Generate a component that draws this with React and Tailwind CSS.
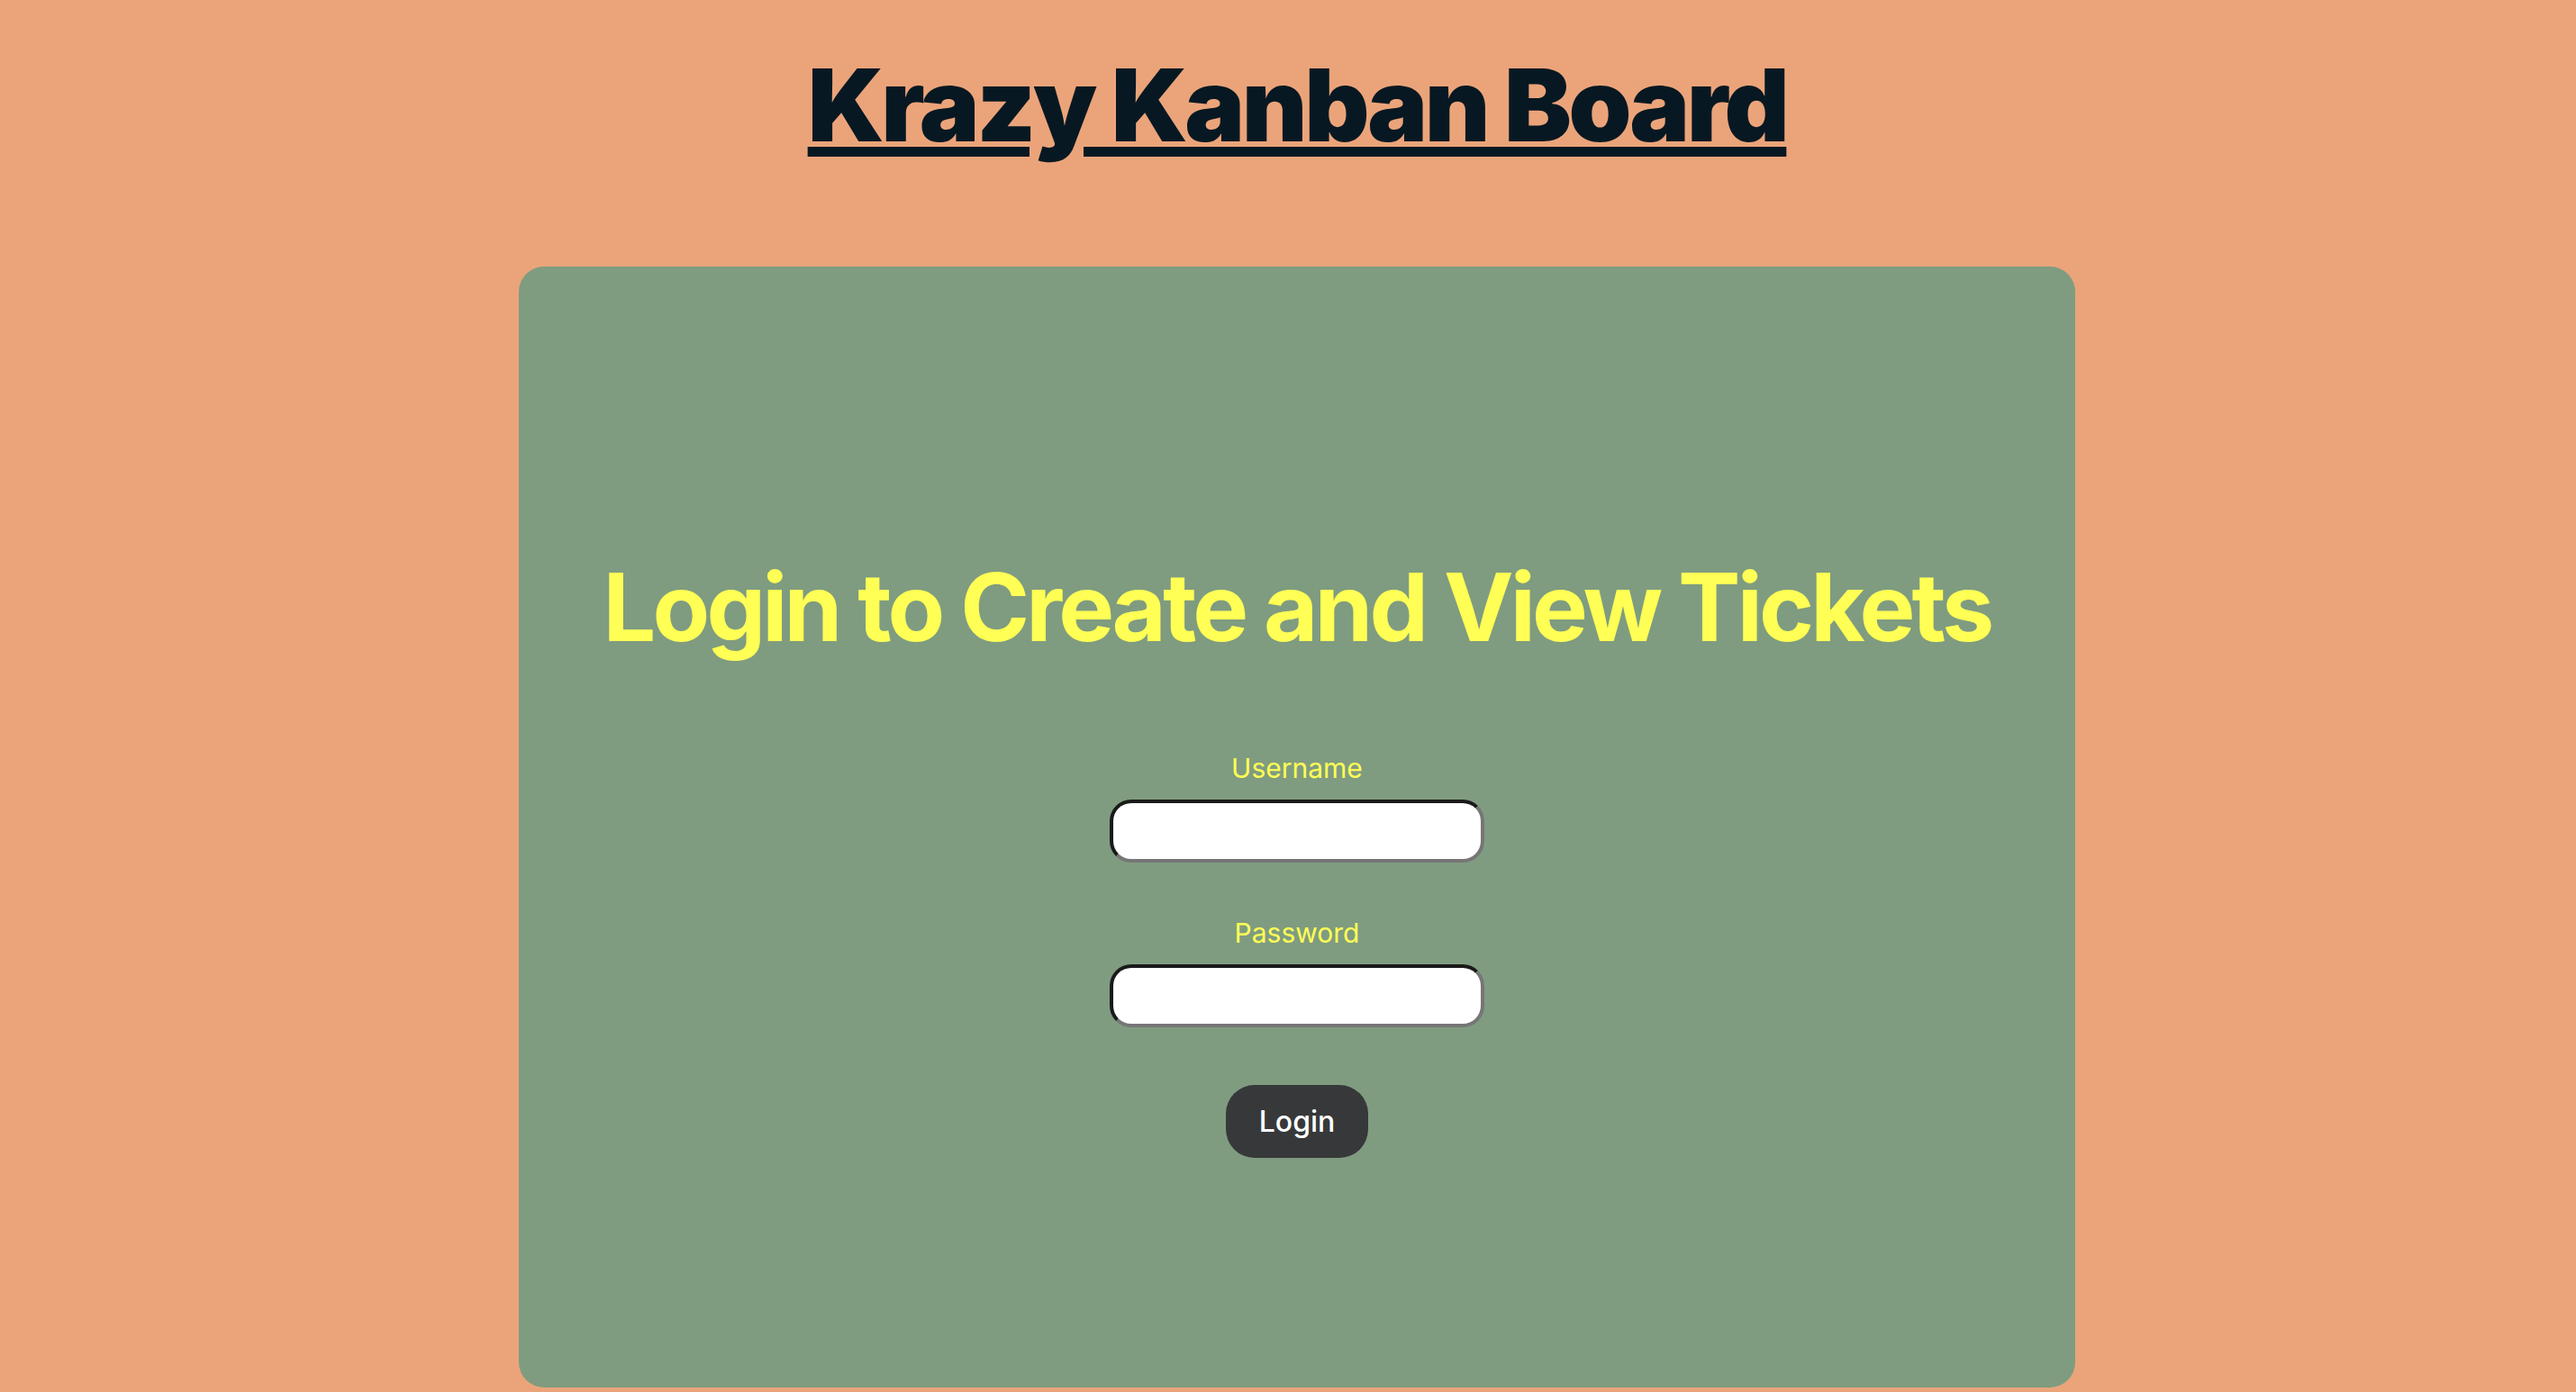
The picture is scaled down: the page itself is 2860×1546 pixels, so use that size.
import { useState } from "react";

const Login = () => {
    const [loginData, setLoginData] = useState({
        username: "",
        password: "",
    });

    const handleChange = (e) => {
        const { name, value } = e.target;
        setLoginData({
            ...loginData,
            [name]: value,
        });
    };

    const handleSubmit = (e) => {
        e.preventDefault();
    };

    return (
        <div className="min-h-screen bg-[#eba47a] pl-[20px] font-['Inter',sans-serif]">
            {/* Header */}
            <div className="flex justify-center pt-[60px]">
                <h1 className="text-[112px] leading-none font-black tracking-[-0.03em] text-[#081822] underline decoration-[11px] underline-offset-[6px]">
                    Krazy Kanban Board
                </h1>
            </div>

            {/* Login card */}
            <div className="mx-auto mt-[124px] w-[1728px] h-[1245px] bg-[#7f9c80] rounded-[28px] pt-[326px]">
                <form onSubmit={handleSubmit} className="flex flex-col items-center">
                    <h2 className="text-[104px] leading-none font-bold tracking-[-0.037em] text-[#ffff55]">
                        Login to Create and View Tickets
                    </h2>

                    <label className="mt-[112px] text-[30px] leading-none text-[#ffff55]">Username</label>
                    <input
                        type="text"
                        name="username"
                        value={loginData.username}
                        onChange={handleChange}
                        className="mt-[20px] w-[416px] h-[70px] bg-white rounded-[24px] border-4 border-t-[#1a1a1a] border-l-[#1a1a1a] border-r-[#767676] border-b-[#767676] px-4 text-[30px] outline-none"
                    />

                    <label className="mt-[63px] text-[30px] leading-none text-[#ffff55]">Password</label>
                    <input
                        type="password"
                        name="password"
                        value={loginData.password}
                        onChange={handleChange}
                        className="mt-[20px] w-[416px] h-[70px] bg-white rounded-[24px] border-4 border-t-[#1a1a1a] border-l-[#1a1a1a] border-r-[#767676] border-b-[#767676] px-4 text-[30px] outline-none"
                    />

                    <button
                        type="submit"
                        className="mt-[64px] w-[158px] h-[81px] rounded-[32px] bg-[#37383a] text-white text-[32px] font-medium"
                    >
                        Login
                    </button>
                </form>
            </div>
        </div>
    );
};

export default Login;
